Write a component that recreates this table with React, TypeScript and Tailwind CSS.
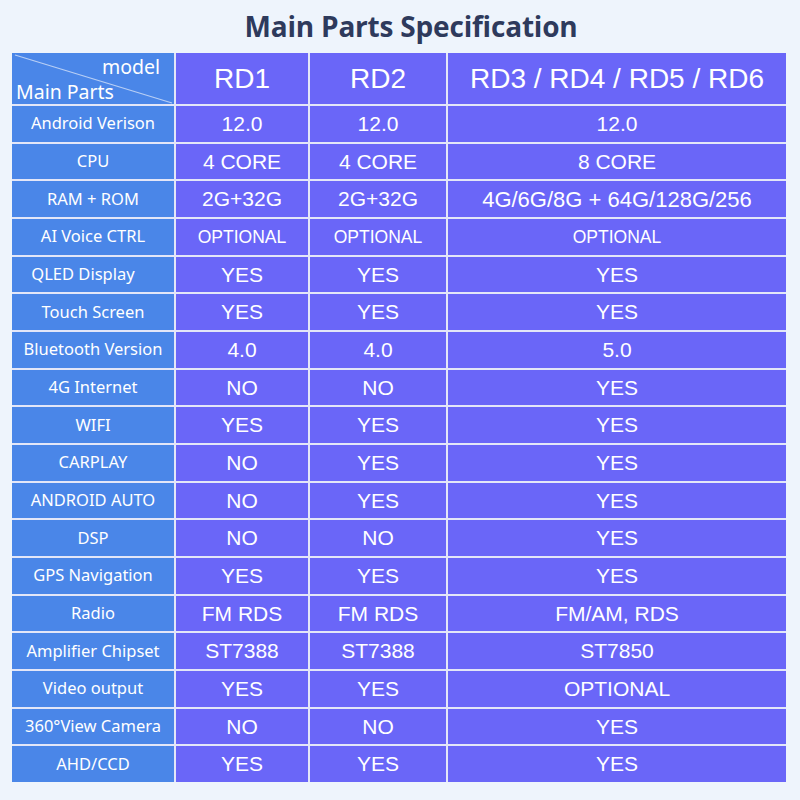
const rows: [string, string, string, string][] = [
  ['Android Verison', '12.0', '12.0', '12.0'],
  ['CPU', '4 CORE', '4 CORE', '8 CORE'],
  ['RAM + ROM', '2G+32G', '2G+32G', '4G/6G/8G + 64G/128G/256'],
  ['AI Voice CTRL', 'OPTIONAL', 'OPTIONAL', 'OPTIONAL'],
  ['QLED Display', 'YES', 'YES', 'YES'],
  ['Touch Screen', 'YES', 'YES', 'YES'],
  ['Bluetooth Version', '4.0', '4.0', '5.0'],
  ['4G Internet', 'NO', 'NO', 'YES'],
  ['WIFI', 'YES', 'YES', 'YES'],
  ['CARPLAY', 'NO', 'YES', 'YES'],
  ['ANDROID AUTO', 'NO', 'YES', 'YES'],
  ['DSP', 'NO', 'NO', 'YES'],
  ['GPS Navigation', 'YES', 'YES', 'YES'],
  ['Radio', 'FM RDS', 'FM RDS', 'FM/AM, RDS'],
  ['Amplifier Chipset', 'ST7388', 'ST7388', 'ST7850'],
  ['Video output', 'YES', 'YES', 'OPTIONAL'],
  ['360°View Camera', 'NO', 'NO', 'YES'],
  ['AHD/CCD', 'YES', 'YES', 'YES'],
];

const label = 'flex items-center justify-center bg-[#4a86e8] text-white text-[16.5px] font-["Noto_Sans",sans-serif]';
const cell = 'flex items-center justify-center bg-[#6a66f8] text-white font-["Liberation_Sans",Arial,sans-serif]';

export default function App() {
  return (
    <div className="w-[800px] h-[800px] bg-[#eef4fc] flex flex-col">
      <h1 className='h-[53px] flex items-center justify-center pl-[22px] pb-[1px] text-[28px] font-bold text-[#2e3a5c] font-["Open_Sans",sans-serif] tracking-[-0.2px]'>
        Main Parts Specification
      </h1>
      <div className="ml-[12px] w-[774px] h-[729px] grid grid-cols-[162px_132px_136px_338px] grid-rows-[51px_repeat(18,minmax(0,1fr))] gap-x-[2px] gap-y-[2px] bg-[#e3e6f8]">
        {/* corner cell with diagonal */}
        <div className='relative bg-[#4a86e8] text-white text-[19.5px] leading-none font-["Noto_Sans",sans-serif]'>
          <svg className="absolute inset-0" width="162" height="51" viewBox="0 0 162 51">
            <line x1="3" y1="2" x2="160" y2="50" stroke="#b8cff5" strokeWidth="1.2" />
          </svg>
          <span className="absolute right-[14px] top-[4px]">model</span>
          <span className="absolute left-[4px] bottom-[3px]">Main Parts</span>
        </div>
        <div className={`${cell} text-[28px]`}>RD1</div>
        <div className={`${cell} text-[28px]`}>RD2</div>
        <div className={`${cell} text-[28px]`}>RD3 / RD4 / RD5 / RD6</div>

        {rows.map(([name, a, b, c]) => (
          <div key={name} className="contents">
            <div className={`${label} ${name === 'QLED Display' ? 'pr-[20px]' : ''}`}>{name}</div>
            <div className={`${cell} ${a === 'OPTIONAL' ? 'text-[17.5px]' : 'text-[21px]'}`}>{a}</div>
            <div className={`${cell} ${b === 'OPTIONAL' ? 'text-[17.5px]' : 'text-[21px]'}`}>{b}</div>
            <div className={`${cell} ${name === 'AI Voice CTRL' ? 'text-[17.5px]' : name === 'RAM + ROM' ? 'text-[22px]' : 'text-[21px]'}`}>{c}</div>
          </div>
        ))}
      </div>
    </div>
  );
}
